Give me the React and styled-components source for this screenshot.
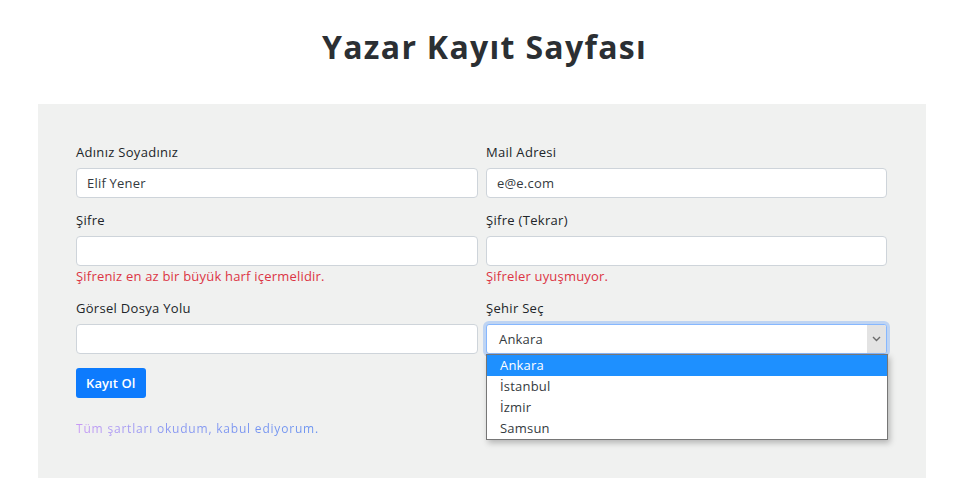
import React from "react";
import styled, { createGlobalStyle } from "styled-components";

const Global = createGlobalStyle`
  html, body { margin: 0; padding: 0; background: #ffffff; }
  body { font-family: "Open Sans", "Noto Sans", sans-serif; color: #212529; letter-spacing: 0.2px; }
  * { box-sizing: border-box; }
`;

const Page = styled.div`
  width: 969px;
  height: 498px;
  overflow: hidden;
`;

const Title = styled.h1`
  margin: 0;
  padding-top: 26px;
  height: 104px;
  text-align: center;
  font-family: "Open Sans", sans-serif;
  font-weight: 700;
  font-size: 32px;
  line-height: 42px;
  color: #2b2f33;
  letter-spacing: 1.3px;
`;

const Panel = styled.div`
  margin-left: 38px;
  width: 888px;
  background: #f0f1f0;
  padding: 38px 39px 40px 38px;
`;

const Grid = styled.div`
  display: grid;
  grid-template-columns: 402px 401px;
  column-gap: 8px;
  row-gap: 12px;
`;

const Field = styled.div`
  display: flex;
  flex-direction: column;
  position: relative;
`;

const Label = styled.label`
  font-size: 13px;
  line-height: 20px;
  margin-bottom: 6px;
  color: #212529;
  letter-spacing: 0.3px;
`;

const Input = styled.div`
  height: 30px;
  background: #fff;
  border: 1px solid #ced4da;
  border-radius: 4px;
  padding: 0 ${(p) => p.$pad || 10}px;
  display: flex;
  align-items: center;
  font-size: 13px;
  color: #343a40;
`;

const Select = styled.div`
  height: 30px;
  background: #fff;
  border: 1px solid #86b7fe;
  border-radius: 3px;
  box-shadow: 0 0 0 3px rgba(13, 110, 253, 0.22);
  display: flex;
  align-items: stretch;
  font-size: 13px;
  color: #343a40;
  overflow: hidden;
`;

const SelectValue = styled.div`
  flex: 1;
  display: flex;
  align-items: center;
  padding-left: 12px;
`;

const Arrow = styled.div`
  width: 19px;
  background: #e3e3e3;
  display: flex;
  align-items: center;
  justify-content: center;
`;

const Error = styled.div`
  font-size: 13px;
  line-height: 20px;
  color: #dc3545;
`;

const Dropdown = styled.ul`
  position: absolute;
  left: 0;
  top: 56px;
  width: 402px;
  margin: 0;
  padding: 0;
  list-style: none;
  background: #fff;
  border: 1px solid #767676;
  box-shadow: 2px 3px 6px rgba(0, 0, 0, 0.25);
  z-index: 5;
`;

const Option = styled.li`
  height: 21px;
  line-height: 21px;
  padding-left: 13px;
  font-size: 13px;
  color: ${(p) => (p.$active ? "#fff" : "#343a40")};
  background: ${(p) => (p.$active ? "#1e90ff" : "transparent")};
`;

const Button = styled.button`
  margin-top: 14px;
  height: 30px;
  padding: 0 10px;
  background: #0d7bfd;
  color: #fff;
  border: none;
  border-radius: 3px;
  font-family: inherit;
  font-size: 13px;
  font-weight: 600;
  letter-spacing: 0.1px;
`;

const Terms = styled.p`
  margin: 22px 0 0;
  font-size: 12px;
  line-height: 18px;
  letter-spacing: 0.8px;
  display: inline-block;
  background: linear-gradient(90deg, #c99af5 0%, #8a97f2 35%, #6a93f0 100%);
  -webkit-background-clip: text;
  background-clip: text;
  color: transparent;
`;

const Bottom = styled.div`
  display: flex;
  flex-direction: column;
  align-items: flex-start;
`;

const Chevron = () => (
  <svg width="9" height="6" viewBox="0 0 9 6">
    <path d="M1 1l3.5 3.5L8 1" fill="none" stroke="#6b6b6b" strokeWidth="1.4" />
  </svg>
);

export default function App() {
  return (
    <Page>
      <Global />
      <Title>Yazar Kayıt Sayfası</Title>
      <Panel>
        <Grid>
          <Field>
            <Label>Adınız Soyadınız</Label>
            <Input $pad={10}>Elif Yener</Input>
          </Field>
          <Field>
            <Label>Mail Adresi</Label>
            <Input $pad={10}>e@e.com</Input>
          </Field>
          <Field>
            <Label>Şifre</Label>
            <Input />
            <Error>Şifreniz en az bir büyük harf içermelidir.</Error>
          </Field>
          <Field>
            <Label>Şifre (Tekrar)</Label>
            <Input />
            <Error>Şifreler uyuşmuyor.</Error>
          </Field>
          <Field>
            <Label>Görsel Dosya Yolu</Label>
            <Input />
          </Field>
          <Field>
            <Label>Şehir Seç</Label>
            <Select>
              <SelectValue>Ankara</SelectValue>
              <Arrow>
                <Chevron />
              </Arrow>
            </Select>
            <Dropdown>
              <Option $active>Ankara</Option>
              <Option>İstanbul</Option>
              <Option>İzmir</Option>
              <Option>Samsun</Option>
            </Dropdown>
          </Field>
        </Grid>
        <Bottom>
          <Button>Kayıt Ol</Button>
          <Terms>Tüm şartları okudum, kabul ediyorum.</Terms>
        </Bottom>
      </Panel>
    </Page>
  );
}
